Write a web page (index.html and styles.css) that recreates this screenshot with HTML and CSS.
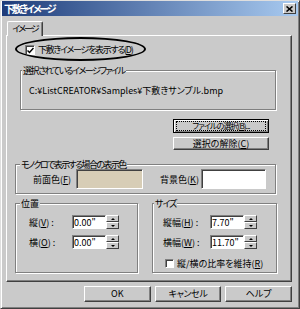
FILE: index.html
```html
<!DOCTYPE html>
<html lang="ja">

<head>
    <meta charset="UTF-8">
    <meta name="viewport" content="width=device-width, initial-scale=1.0">
    <title>下敷きイメージ</title>
    <link rel="stylesheet" href="styles.css">
</head>

<body>
    <div class="window">
        <div class="titlebar">
            <span class="title">下敷きイメージ</span>
            <span class="close">
                <svg width="7" height="6" viewBox="0 0 7 6"><path d="M0.5 0.5 L6.5 5.5 M6.5 0.5 L0.5 5.5" stroke="#000" stroke-width="1.6" fill="none"/></svg>
            </span>
        </div>

        <div class="client">
            <div class="tabs">
                <div class="tab">イメージ</div>
            </div>

            <div class="panel">
                <!-- annotation ring drawn over the checkbox -->
                <div class="mark"></div>

                <div class="check show-check">
                    <span class="box">
                        <svg width="7" height="7" viewBox="0 0 7 7"><path d="M0.5 3.5 L2.5 5.5 L6.5 1" stroke="#000" stroke-width="1.5" fill="none"/></svg>
                    </span>
                    <span>下敷きイメージを表示する(<u>D</u>)</span>
                </div>

                <fieldset class="group file-group">
                    <legend>選択されているイメージファイル</legend>
                    <div class="path">C:¥ListCREATOR¥Samples¥下敷きサンプル.bmp</div>
                </fieldset>

                <div class="file-buttons">
                    <button class="btn default"><span class="focus">ファイルの選択(<u>B</u>)...</span></button>
                    <button class="btn">選択の解除(<u>C</u>)</button>
                </div>

                <fieldset class="group mono-group">
                    <legend>モノクロで表示する場合の表示色</legend>
                    <div class="color-row">
                        <span class="color-label">前面色(<u>F</u>)</span>
                        <span class="swatch fore"></span>
                        <span class="color-label back-label">背景色(<u>K</u>)</span>
                        <span class="swatch back"></span>
                    </div>
                </fieldset>

                <div class="lower">
                    <fieldset class="group pos-group">
                        <legend>位置</legend>
                        <div class="field-row">
                            <span class="field-label">縦(<u>V</u>) :</span>
                            <span class="spin">
                                <input class="spin-input" type="text" value='0.00"'>
                                <span class="spin-btns"><span class="up"></span><span class="down"></span></span>
                            </span>
                        </div>
                        <div class="field-row">
                            <span class="field-label">横(<u>O</u>) :</span>
                            <span class="spin">
                                <input class="spin-input" type="text" value='0.00"'>
                                <span class="spin-btns"><span class="up"></span><span class="down"></span></span>
                            </span>
                        </div>
                    </fieldset>

                    <fieldset class="group size-group">
                        <legend>サイズ</legend>
                        <div class="field-row">
                            <span class="field-label">縦幅(<u>H</u>) :</span>
                            <span class="spin">
                                <input class="spin-input" type="text" value='7.70"'>
                                <span class="spin-btns"><span class="up"></span><span class="down"></span></span>
                            </span>
                        </div>
                        <div class="field-row">
                            <span class="field-label">横幅(<u>W</u>) :</span>
                            <span class="spin">
                                <input class="spin-input" type="text" value='11.70"'>
                                <span class="spin-btns"><span class="up"></span><span class="down"></span></span>
                            </span>
                        </div>
                        <div class="check ratio-check">
                            <span class="box small"></span>
                            <span>縦/横の比率を維持(<u>R</u>)</span>
                        </div>
                    </fieldset>
                </div>
            </div>

            <div class="actions">
                <button class="btn action">OK</button>
                <button class="btn action tight">キャンセル</button>
                <button class="btn action">ヘルプ</button>
            </div>
        </div>
    </div>
</body>
</html>
```

FILE: styles.css
```css
* {
    box-sizing: border-box;
}

body {
    margin: 0;
    font-family: "Noto Sans CJK JP", "Noto Sans", sans-serif;
    font-size: 9px;
    font-feature-settings: "palt";
    color: #000;
}

u {
    text-decoration: underline;
    text-underline-offset: 1px;
}

.window {
    width: 300px;
    height: 309px;
    background-color: #cacaca;
    border: 1px solid;
    border-color: #dedede #404040 #404040 #dedede;
    box-shadow: inset 1px 1px #fff, inset -1px -1px #808080;
}

/* title bar */
.titlebar {
    height: 15px;
    margin: 0 1px;
    padding: 0 2px 0 2px;
    display: flex;
    align-items: center;
    justify-content: space-between;
    background: linear-gradient(to right, #1e3c7a, #a8caf0);
}

.title {
    color: #fff;
    font-weight: bold;
    font-size: 10px;
    line-height: 15px;
    letter-spacing: -2.2px;
}

.close {
    width: 13px;
    height: 11px;
    display: flex;
    align-items: center;
    justify-content: center;
    background-color: #cacaca;
    border: 1px solid;
    border-color: #fff #404040 #404040 #fff;
}

.client {
    padding: 5px 7px 0 5px;
}

/* tab */
.tabs {
    height: 14px;
    padding-left: 1px;
}

.tab {
    position: relative;
    z-index: 1;
    width: 36px;
    height: 15px;
    line-height: 13px;
    text-align: center;
    letter-spacing: -2px;
    background-color: #cacaca;
    border: 1px solid;
    border-bottom: 0;
    border-color: #fff #404040 #fff #fff;
    border-radius: 2px 2px 0 0;
    box-shadow: inset -1px 0 #808080;
}

.panel {
    position: relative;
    height: 247px;
    border: 1px solid;
    border-color: #fff #404040 #404040 #fff;
    box-shadow: inset -1px -1px #808080;
}

.mark {
    position: absolute;
    left: 8px;
    top: 1px;
    width: 131px;
    height: 24px;
    border: 2px solid #000;
    border-radius: 50%;
}

/* checkboxes */
.check {
    display: flex;
    align-items: center;
    line-height: 10px;
}

.box {
    width: 10px;
    height: 10px;
    margin-right: 3px;
    display: flex;
    align-items: center;
    justify-content: center;
    background-color: #fff;
    border: 1px solid;
    border-color: #808080 #fff #fff #808080;
    box-shadow: inset 1px 1px #404040;
}

.box.small {
    width: 9px;
    height: 9px;
}

.show-check {
    height: 10px;
    margin: 9px 0 0 18px;
    letter-spacing: -1.3px;
}

/* group boxes */
.group {
    margin: 0;
    padding: 0;
    min-width: 0;
    border: 1px solid #808080;
    box-shadow: inset 1px 1px #fff, 1px 1px #fff;
}

.group legend {
    height: 9px;
    line-height: 9px;
    margin-left: 1px;
    padding: 0 1px;
    background-color: #cacaca;
}

.file-group {
    width: 256px;
    margin: 11px 0 0 13px;
}

.file-group legend {
    letter-spacing: -1.5px;
}

.mono-group legend {
    letter-spacing: -1.6px;
}

.path {
    padding: 10px 0 12px 8px;
    line-height: 12px;
}

.file-buttons {
    width: 96px;
    margin: 9px 0 0 166px;
    display: flex;
    flex-direction: column;
    gap: 4px;
}

/* buttons */
.btn {
    height: 13px;
    padding: 0;
    font: inherit;
    line-height: 11px;
    color: #000;
    background-color: #cacaca;
    border: 1px solid;
    border-color: #fff #404040 #404040 #fff;
    box-shadow: inset -1px -1px #808080;
}

.btn.default {
    height: 14px;
    border-color: #000;
    box-shadow: inset 1px 1px #fff, inset -1px -1px #808080;
    padding: 1px 2px;
    display: flex;
    font-size: 8px;
    letter-spacing: -0.9px;
}

.btn.tight {
    letter-spacing: -0.4px;
}

.focus {
    flex: 1;
    line-height: 8px;
    border: 1px dotted #000;
}

.mono-group {
    width: 261px;
    margin: 10px 0 0 8px;
}

.mono-group legend,
.pos-group legend {
    margin-left: 4px;
}

.color-row {
    display: flex;
    align-items: center;
    padding: 0 0 4px 17px;
}

.color-label {
    width: 43px;
}

.back-label {
    width: 41px;
    margin-left: 17px;
}

.swatch {
    height: 20px;
    border: 1px solid;
    border-color: #808080 #fff #fff #808080;
    box-shadow: inset 1px 1px #404040;
}

.swatch.fore {
    width: 67px;
    background-color: #d7cdb6;
}

.swatch.back {
    width: 65px;
    background-color: #fff;
}

.lower {
    display: flex;
    gap: 14px;
    margin: 5px 0 0 8px;
}

.pos-group {
    width: 123px;
}

.size-group {
    width: 125px;
}

.size-group legend {
    letter-spacing: -1px;
}

.field-row {
    display: flex;
    align-items: center;
    height: 14px;
    margin-top: 6px;
}

.field-row:first-of-type {
    margin-top: 7px;
}

.pos-group .field-row {
    padding-left: 13px;
}

.pos-group .field-label {
    width: 43px;
}

.size-group .field-row {
    padding-left: 10px;
}

.size-group .field-label {
    width: 47px;
}

.spin {
    display: flex;
}

.spin-input {
    width: 34px;
    height: 14px;
    padding: 0 0 0 1px;
    font: inherit;
    color: #000;
    background-color: #fff;
    border: 1px solid;
    border-color: #808080 #fff #fff #808080;
    box-shadow: inset 1px 1px #404040;
    outline: none;
}

.spin-btns {
    width: 13px;
    height: 14px;
    display: flex;
    flex-direction: column;
}

.spin-btns span {
    flex: 1;
    display: flex;
    align-items: center;
    justify-content: center;
    background-color: #cacaca;
    border: 1px solid;
    border-color: #fff #404040 #404040 #fff;
}

.spin-btns .up::after {
    content: "";
    border-left: 2px solid transparent;
    border-right: 2px solid transparent;
    border-bottom: 2px solid #000;
}

.spin-btns .down::after {
    content: "";
    border-left: 2px solid transparent;
    border-right: 2px solid transparent;
    border-top: 2px solid #000;
}

.ratio-check {
    margin: 10px 0 4px 12px;
    height: 9px;
}

/* dialog buttons */
.actions {
    display: flex;
    gap: 4px;
    margin: 4px 0 0 78px;
}

.btn.action {
    width: 67px;
    height: 16px;
    line-height: 14px;
}
```
